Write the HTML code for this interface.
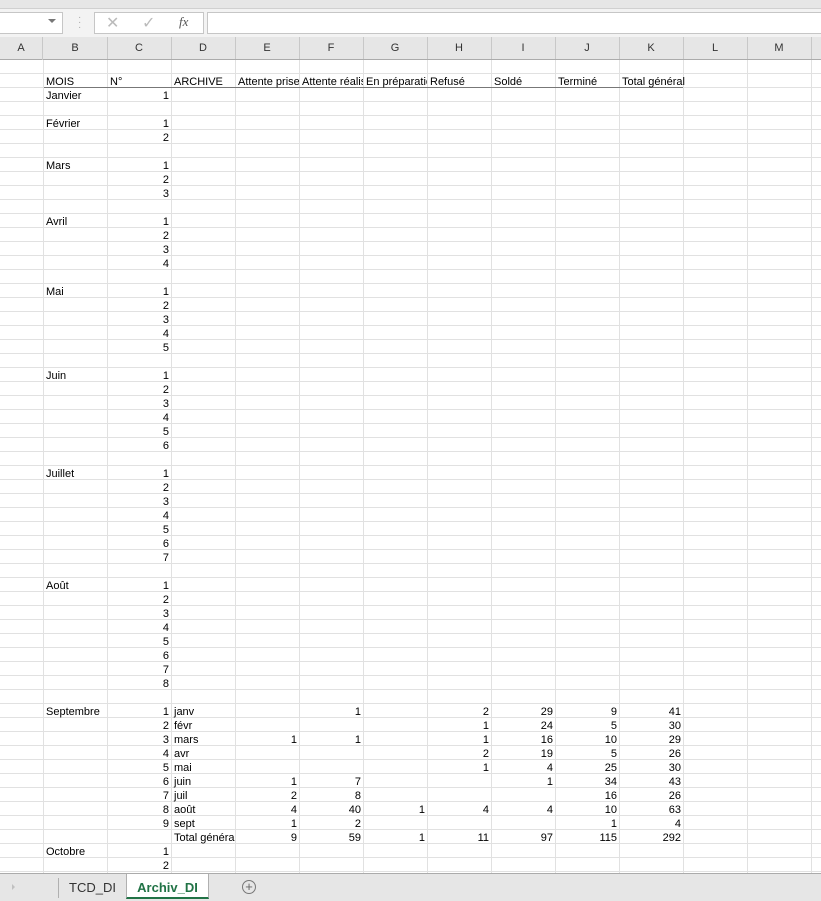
<!DOCTYPE html>
<html><head><meta charset="utf-8"><style>
body{margin:0;width:821px;height:900px;overflow:hidden;background:#fff;font-family:"Liberation Sans",Arial,sans-serif;font-size:11px;color:#000;position:relative}
.c,.r{position:absolute;height:14px;line-height:16px;white-space:nowrap}
.r{width:60px;text-align:right}
.h{position:absolute;top:37px;height:23px;line-height:23px;text-align:center;width:64px;color:#333;font-size:11px}
</style></head><body>
<div style="position:absolute;left:0;top:0;width:821px;height:8px;background:#e6e6e6;border-bottom:1px solid #d0d0d0"></div>
<div style="position:absolute;left:0;top:9px;width:821px;height:28px;background:#f3f3f3"></div>
<div style="position:absolute;left:0;top:12px;width:62px;height:20px;background:#fff;border:1px solid #c6c6c6;border-left:none"></div>
<div style="position:absolute;left:48px;top:19px;width:0;height:0;border-left:4px solid transparent;border-right:4px solid transparent;border-top:4px solid #777"></div>
<div style="position:absolute;left:78px;top:15px;color:#aaa;font-size:10px;line-height:5px">·<br>·<br>·</div>
<div style="position:absolute;left:94px;top:12px;width:108px;height:20px;background:#fff;border:1px solid #c6c6c6"></div>
<div style="position:absolute;left:106px;top:13px;color:#bbb;font-size:16px">✕</div>
<div style="position:absolute;left:142px;top:13px;color:#bbb;font-size:16px">✓</div>
<div style="position:absolute;left:179px;top:14px;color:#555;font-family:'Liberation Serif',serif;font-style:italic;font-size:13px">fx</div>
<div style="position:absolute;left:207px;top:12px;width:614px;height:20px;background:#fff;border:1px solid #c6c6c6"></div>
<div style="position:absolute;left:0;top:37px;width:821px;height:23px;background:#e6e6e6;border-bottom:1px solid #ababab;box-sizing:border-box;background-image:repeating-linear-gradient(to right,transparent 0 63px,#c8c8c8 63px 64px);background-position:44px 0"></div>
<div class="h" style="left:0;width:43px;border-right:1px solid #c8c8c8;box-sizing:border-box">A</div>
<div class="h" style="left:43px">B</div><div class="h" style="left:107px">C</div><div class="h" style="left:171px">D</div><div class="h" style="left:235px">E</div><div class="h" style="left:299px">F</div><div class="h" style="left:363px">G</div><div class="h" style="left:427px">H</div><div class="h" style="left:491px">I</div><div class="h" style="left:555px">J</div><div class="h" style="left:619px">K</div><div class="h" style="left:683px">L</div><div class="h" style="left:747px">M</div>
<div style="position:absolute;left:0;top:60px;width:821px;height:814px;background-image:repeating-linear-gradient(to bottom,transparent 0 13px,#e1e1e1 13px 14px)"></div>
<div style="position:absolute;left:43px;top:60px;width:778px;height:814px;border-left:1px solid #e1e1e1;background-image:repeating-linear-gradient(to right,transparent 0 63px,#e1e1e1 63px 64px)"></div>
<div style="position:absolute;left:43px;top:87px;width:640px;height:1px;background:#777"></div>
<div style="position:absolute;left:0;top:60px;width:43px;height:814px;background:#fff;background-image:repeating-linear-gradient(to bottom,transparent 0 13px,#e1e1e1 13px 14px)"></div>
<div style="position:absolute;left:43px;top:60px;width:1px;height:814px;background:#e1e1e1"></div>
<div class="c" style="left:46px;top:74px">MOIS</div>
<div class="c" style="left:110px;top:74px">N°</div>
<div class="c" style="left:174px;top:74px">ARCHIVE</div>
<div class="c" style="left:238px;top:74px;width:61px;overflow:hidden">Attente prise</div>
<div class="c" style="left:302px;top:74px;width:61px;overflow:hidden">Attente réalis</div>
<div class="c" style="left:366px;top:74px;width:61px;overflow:hidden">En préparatio</div>
<div class="c" style="left:430px;top:74px">Refusé</div>
<div class="c" style="left:494px;top:74px">Soldé</div>
<div class="c" style="left:558px;top:74px">Terminé</div>
<div class="c" style="left:622px;top:74px">Total général</div>
<div class="c" style="left:46px;top:88px">Janvier</div>
<div class="c" style="left:46px;top:116px">Février</div>
<div class="c" style="left:46px;top:158px">Mars</div>
<div class="c" style="left:46px;top:214px">Avril</div>
<div class="c" style="left:46px;top:284px">Mai</div>
<div class="c" style="left:46px;top:368px">Juin</div>
<div class="c" style="left:46px;top:466px">Juillet</div>
<div class="c" style="left:46px;top:578px">Août</div>
<div class="c" style="left:46px;top:704px">Septembre</div>
<div class="c" style="left:46px;top:844px">Octobre</div>
<div class="r" style="left:109px;top:88px">1</div>
<div class="r" style="left:109px;top:116px">1</div><div class="r" style="left:109px;top:130px">2</div>
<div class="r" style="left:109px;top:158px">1</div><div class="r" style="left:109px;top:172px">2</div><div class="r" style="left:109px;top:186px">3</div>
<div class="r" style="left:109px;top:214px">1</div><div class="r" style="left:109px;top:228px">2</div><div class="r" style="left:109px;top:242px">3</div><div class="r" style="left:109px;top:256px">4</div>
<div class="r" style="left:109px;top:284px">1</div><div class="r" style="left:109px;top:298px">2</div><div class="r" style="left:109px;top:312px">3</div><div class="r" style="left:109px;top:326px">4</div><div class="r" style="left:109px;top:340px">5</div>
<div class="r" style="left:109px;top:368px">1</div><div class="r" style="left:109px;top:382px">2</div><div class="r" style="left:109px;top:396px">3</div><div class="r" style="left:109px;top:410px">4</div><div class="r" style="left:109px;top:424px">5</div><div class="r" style="left:109px;top:438px">6</div>
<div class="r" style="left:109px;top:466px">1</div><div class="r" style="left:109px;top:480px">2</div><div class="r" style="left:109px;top:494px">3</div><div class="r" style="left:109px;top:508px">4</div><div class="r" style="left:109px;top:522px">5</div><div class="r" style="left:109px;top:536px">6</div><div class="r" style="left:109px;top:550px">7</div>
<div class="r" style="left:109px;top:578px">1</div><div class="r" style="left:109px;top:592px">2</div><div class="r" style="left:109px;top:606px">3</div><div class="r" style="left:109px;top:620px">4</div><div class="r" style="left:109px;top:634px">5</div><div class="r" style="left:109px;top:648px">6</div><div class="r" style="left:109px;top:662px">7</div><div class="r" style="left:109px;top:676px">8</div>
<div class="r" style="left:109px;top:704px">1</div><div class="r" style="left:109px;top:718px">2</div><div class="r" style="left:109px;top:732px">3</div><div class="r" style="left:109px;top:746px">4</div><div class="r" style="left:109px;top:760px">5</div><div class="r" style="left:109px;top:774px">6</div><div class="r" style="left:109px;top:788px">7</div><div class="r" style="left:109px;top:802px">8</div><div class="r" style="left:109px;top:816px">9</div>
<div class="r" style="left:109px;top:844px">1</div><div class="r" style="left:109px;top:858px">2</div>
<div class="c" style="left:174px;top:704px">janv</div>
<div class="c" style="left:174px;top:718px">févr</div>
<div class="c" style="left:174px;top:732px">mars</div>
<div class="c" style="left:174px;top:746px">avr</div>
<div class="c" style="left:174px;top:760px">mai</div>
<div class="c" style="left:174px;top:774px">juin</div>
<div class="c" style="left:174px;top:788px">juil</div>
<div class="c" style="left:174px;top:802px">août</div>
<div class="c" style="left:174px;top:816px">sept</div>
<div class="c" style="left:174px;top:830px;width:61px;overflow:hidden">Total général</div>
<div class="r" style="left:237px;top:732px">1</div><div class="r" style="left:237px;top:774px">1</div><div class="r" style="left:237px;top:788px">2</div><div class="r" style="left:237px;top:802px">4</div><div class="r" style="left:237px;top:816px">1</div><div class="r" style="left:237px;top:830px">9</div>
<div class="r" style="left:301px;top:704px">1</div><div class="r" style="left:301px;top:732px">1</div><div class="r" style="left:301px;top:774px">7</div><div class="r" style="left:301px;top:788px">8</div><div class="r" style="left:301px;top:802px">40</div><div class="r" style="left:301px;top:816px">2</div><div class="r" style="left:301px;top:830px">59</div>
<div class="r" style="left:365px;top:802px">1</div><div class="r" style="left:365px;top:830px">1</div>
<div class="r" style="left:429px;top:704px">2</div><div class="r" style="left:429px;top:718px">1</div><div class="r" style="left:429px;top:732px">1</div><div class="r" style="left:429px;top:746px">2</div><div class="r" style="left:429px;top:760px">1</div><div class="r" style="left:429px;top:802px">4</div><div class="r" style="left:429px;top:830px">11</div>
<div class="r" style="left:493px;top:704px">29</div><div class="r" style="left:493px;top:718px">24</div><div class="r" style="left:493px;top:732px">16</div><div class="r" style="left:493px;top:746px">19</div><div class="r" style="left:493px;top:760px">4</div><div class="r" style="left:493px;top:774px">1</div><div class="r" style="left:493px;top:802px">4</div><div class="r" style="left:493px;top:830px">97</div>
<div class="r" style="left:557px;top:704px">9</div><div class="r" style="left:557px;top:718px">5</div><div class="r" style="left:557px;top:732px">10</div><div class="r" style="left:557px;top:746px">5</div><div class="r" style="left:557px;top:760px">25</div><div class="r" style="left:557px;top:774px">34</div><div class="r" style="left:557px;top:788px">16</div><div class="r" style="left:557px;top:802px">10</div><div class="r" style="left:557px;top:816px">1</div><div class="r" style="left:557px;top:830px">115</div>
<div class="r" style="left:621px;top:704px">41</div><div class="r" style="left:621px;top:718px">30</div><div class="r" style="left:621px;top:732px">29</div><div class="r" style="left:621px;top:746px">26</div><div class="r" style="left:621px;top:760px">30</div><div class="r" style="left:621px;top:774px">43</div><div class="r" style="left:621px;top:788px">26</div><div class="r" style="left:621px;top:802px">63</div><div class="r" style="left:621px;top:816px">4</div><div class="r" style="left:621px;top:830px">292</div>
<div style="position:absolute;left:0;top:873px;width:821px;height:27px;background:#e6e6e6;border-top:1px solid #ababab"></div>
<div style="position:absolute;left:12px;top:884px;width:0;height:0;border-top:3px solid transparent;border-bottom:3px solid transparent;border-left:3px solid #c0c0c0"></div>
<div style="position:absolute;left:58px;top:878px;width:1px;height:20px;background:#b0b0b0"></div>
<div style="position:absolute;left:59px;top:880px;width:67px;text-align:center;font-size:13px;color:#333;line-height:16px">TCD_DI</div>
<div style="position:absolute;left:126px;top:874px;width:81px;height:23px;background:#fff;border-left:1px solid #b0b0b0;border-right:1px solid #b0b0b0;border-bottom:2px solid #217346"></div>
<div style="position:absolute;left:127px;top:880px;width:81px;text-align:center;font-size:13px;font-weight:bold;color:#217346;line-height:16px">Archiv_DI</div>
<div style="position:absolute;left:242px;top:880px;width:12px;height:12px;border:1px solid #777;border-radius:50%;text-align:center;line-height:12px;font-size:13px;color:#666">+</div>
</body></html>
